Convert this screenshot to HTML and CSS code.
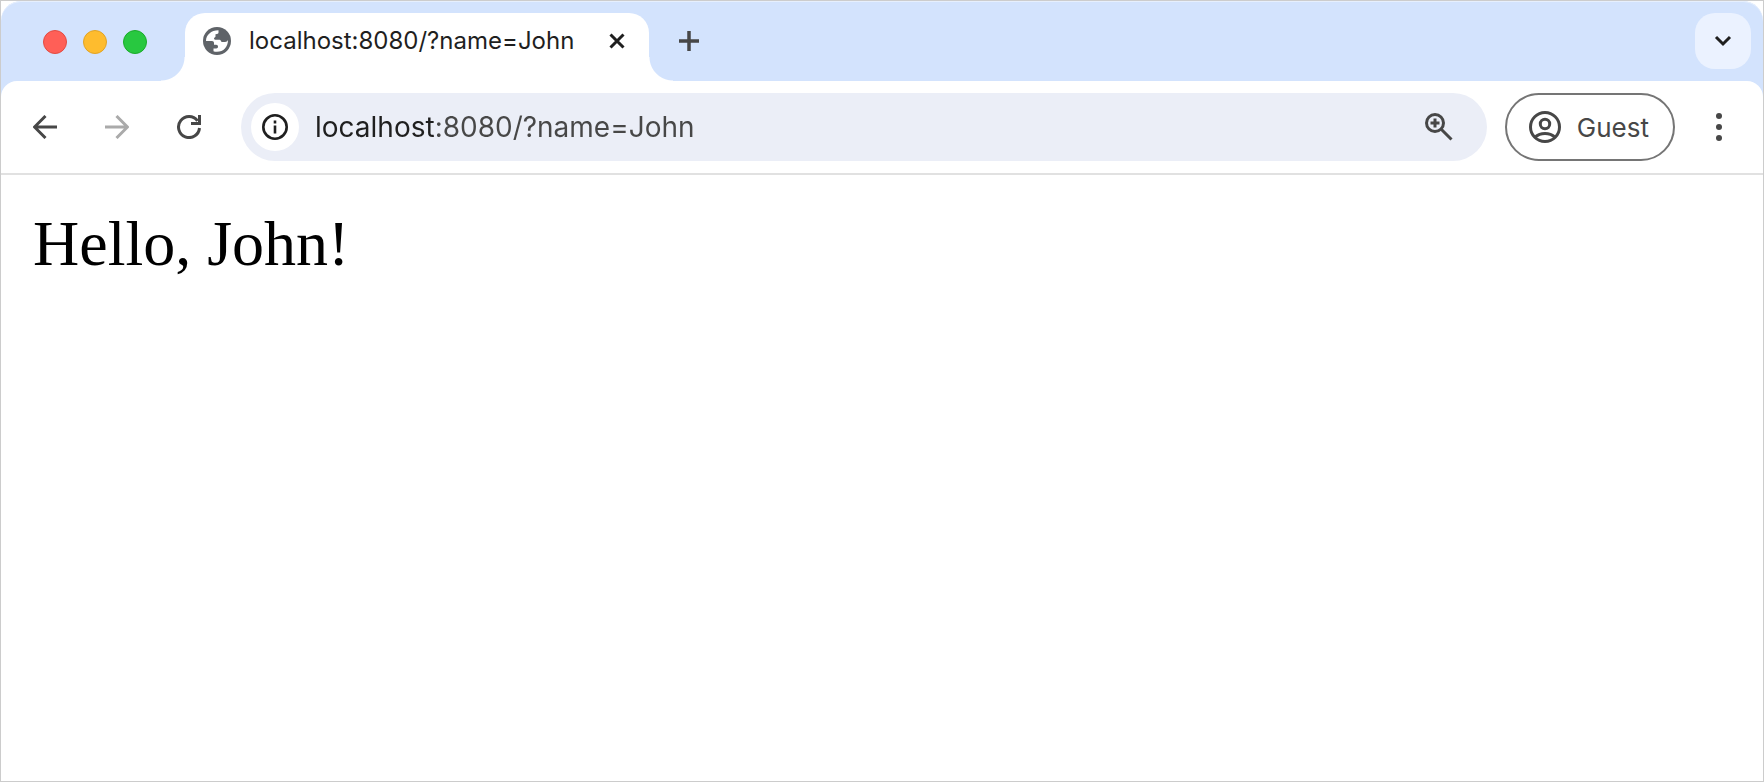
FILE: index.html
```html
<!DOCTYPE html>
<html lang="en">
<head>
<meta charset="utf-8">
<title>localhost:8080/?name=John</title>
<link rel="stylesheet" href="styles.css">
</head>
<body>
<div class="window">
  <div class="browser-frame">
    <header class="tab-strip">
      <div class="traffic-lights">
        <button class="light light-close" aria-label="Close window"></button>
        <button class="light light-minimize" aria-label="Minimize window"></button>
        <button class="light light-zoom" aria-label="Zoom window"></button>
      </div>
      <div class="tab">
        <svg class="favicon" viewBox="0 0 28 28" aria-hidden="true">
          <circle cx="14" cy="14" r="14" fill="#5f6368"/>
          <path fill="#fff" d="M3 14C3 8 8 3.200 15.500 3.200V5.500C15.500 6.500 14.500 7.200 12.500 7.200V9.500C12.500 10.500 11 10.200 11 11.500C11 12.500 11.800 12.700 13 12.700H16.500C18 12.700 18 15 19 15H22C23.500 15 24.300 14 25 13C25 20 20.500 24.800 14 24.800C12.500 24.800 11.300 24.700 10.500 24.300V21.500H13.200C14.500 21.500 15 20.500 15 19.500C15 18.500 14.200 17.800 13.200 17.800H11V16C11 14.700 10.200 14 9 14Z"/>
        </svg>
        <span class="tab-title">localhost:8080/?name=John</span>
        <button class="tab-close" aria-label="Close tab">
          <svg viewBox="0 0 16 16" width="16" height="16"><path d="M1.500 1.500l13 13M14.500 1.500l-13 13" stroke="currentColor" stroke-width="3"/></svg>
        </button>
      </div>
      <button class="new-tab" aria-label="New tab">
        <svg viewBox="0 0 20 20" width="20" height="20"><path d="M10 0v20M0 10h20" stroke="currentColor" stroke-width="3.500"/></svg>
      </button>
      <button class="tab-search" aria-label="Search tabs">
        <svg viewBox="0 0 18 12" width="18" height="12"><path d="M2 2l7 7 7-7" fill="none" stroke="currentColor" stroke-width="3"/></svg>
      </button>
    </header>
    <nav class="toolbar">
      <div class="nav-buttons">
        <button class="icon-button" aria-label="Back">
          <svg viewBox="0 0 24 24" width="24" height="24"><path d="M24 12H2M12.500 1L1.500 12l11 11" fill="none" stroke="currentColor" stroke-width="3"/></svg>
        </button>
        <button class="icon-button" aria-label="Forward" disabled>
          <svg viewBox="0 0 24 24" width="24" height="24"><path d="M0 12h22M11.500 1l11 11-11 11" fill="none" stroke="currentColor" stroke-width="3"/></svg>
        </button>
        <button class="icon-button" aria-label="Reload">
          <svg viewBox="0 0 24 24" width="24" height="24"><path d="M22.500 13A10.500 10.500 0 1 1 20.500 5.800M22.500 0v8.500H14" fill="none" stroke="currentColor" stroke-width="3"/></svg>
        </button>
      </div>
      <form class="omnibox">
        <button type="button" class="site-info" aria-label="View site information">
          <svg viewBox="0 0 26 26" width="26" height="26"><circle cx="13" cy="13" r="11.700" fill="none" stroke="currentColor" stroke-width="2.600"/><path d="M13 11.500v8M13 6.500v3" stroke="currentColor" stroke-width="2.600"/></svg>
        </button>
        <input class="address" type="text" aria-label="Address and search bar" value="localhost:8080/?name=John" spellcheck="false">
        <button type="button" class="page-zoom" aria-label="Page zoom">
          <svg viewBox="0 0 28 28" width="28" height="28"><circle cx="10" cy="10" r="8.500" fill="none" stroke="currentColor" stroke-width="3"/><path d="M16.500 16.500L26.500 26.500M10 5.500v9M5.500 10h9" stroke="currentColor" stroke-width="3"/></svg>
        </button>
      </form>
      <button class="profile">
        <svg viewBox="0 0 32 32" width="32" height="32" fill="none" stroke="currentColor" stroke-width="3"><circle cx="16" cy="16" r="14.500"/><circle cx="16" cy="13" r="4.700"/><path d="M6 26.200C11.500 21.200 20.500 21.200 26 26.200"/></svg>
        <span>Guest</span>
      </button>
      <button class="menu" aria-label="Menu">
        <svg viewBox="0 0 6 28" width="6" height="28" fill="currentColor"><circle cx="3" cy="3" r="3"/><circle cx="3" cy="14" r="3"/><circle cx="3" cy="25" r="3"/></svg>
      </button>
    </nav>
  </div>
  <main class="page">
    <p class="greeting">Hello, John!</p>
  </main>
</div>
</body>
</html>
```
FILE: styles.css
```css
* {
  box-sizing: border-box;
}

body {
  margin: 0;
  background: #fff;
  font-family: Inter, "Liberation Sans", sans-serif;
}

button {
  display: flex;
  align-items: center;
  justify-content: center;
  margin: 0;
  padding: 0;
  border: 0;
  background: none;
  color: #474747;
  font: inherit;
}

svg {
  flex: none;
}

.window {
  display: flex;
  flex-direction: column;
  min-height: 100vh;
  border: 1px solid #ccc;
}

.browser-frame {
  border-radius: 20px 20px 0 0;
  background: #d3e3fd;
  box-shadow: inset 0 1px #e6effd;
}

.tab-strip {
  display: flex;
  padding: 12px 12px 0 42px;
}

.traffic-lights {
  display: flex;
  gap: 16px;
  margin: 17px 38px 0 0;
}

.light {
  width: 24px;
  height: 24px;
  border: 1px solid;
  border-radius: 50%;
}

.light-close {
  border-color: #e24b41;
  background: #ff5f57;
}

.light-minimize {
  border-color: #e1a325;
  background: #febc2e;
}

.light-zoom {
  border-color: #1aab29;
  background: #28c840;
}

.tab {
  position: relative;
  display: flex;
  align-items: flex-start;
  width: 464px;
  height: 68px;
  padding: 0 20px 0 18px;
  border-radius: 20px 20px 0 0;
  background: #fff;
}

.tab::before,
.tab::after {
  position: absolute;
  bottom: 0;
  width: 24px;
  height: 24px;
  content: "";
}

.tab::before {
  right: 100%;
  background: radial-gradient(circle at 0 0, transparent 23px, #fff 24px);
}

.tab::after {
  left: 100%;
  background: radial-gradient(circle at 100% 0, transparent 23px, #fff 24px);
}

.favicon {
  width: 28px;
  height: 28px;
  margin: 14px 18px 0 0;
}

.tab-title {
  flex: 1;
  color: #1f1f1f;
  font-size: 24px;
  line-height: 56px;
  white-space: nowrap;
}

.tab-close {
  width: 24px;
  height: 56px;
  color: #1f1f1f;
}

.new-tab {
  width: 56px;
  height: 56px;
  margin-left: 12px;
}

.tab-search {
  width: 56px;
  height: 56px;
  margin-left: auto;
  border-radius: 20px;
  background: #ebf2ff;
  color: #1f1f1f;
}

.toolbar {
  display: flex;
  align-items: center;
  padding: 12px 16px 12px 8px;
  border-bottom: 2px solid #e1e1e1;
  border-radius: 16px 16px 0 0;
  background: #fff;
}

.nav-buttons {
  display: flex;
  margin-right: 16px;
}

.icon-button {
  width: 72px;
  height: 68px;
}

.icon-button:disabled {
  color: #aaa;
}

.omnibox {
  display: flex;
  flex: 1;
  align-items: center;
  height: 68px;
  padding: 0 28px 0 10px;
  border-radius: 34px;
  background: #ebeef7;
}

.site-info {
  width: 48px;
  height: 48px;
  margin-right: 16px;
  border-radius: 50%;
  background: #fff;
  color: #1f1f1f;
}

/* The host name is drawn darker than the rest of the address. */
.address {
  flex: 1;
  min-width: 0;
  height: 48px;
  padding: 0;
  border: 0;
  outline: 0;
  background: linear-gradient(90deg, #1f1f1f 120px, #474747 120px);
  background-clip: text;
  color: transparent;
  font: 28px Inter, "Liberation Sans", sans-serif;
}

.page-zoom {
  width: 40px;
  height: 48px;
}

.profile {
  gap: 16px;
  height: 68px;
  margin-left: 18px;
  padding: 0 24px 0 22px;
  border: 2px solid #757575;
  border-radius: 34px;
  font-size: 26px;
}

.menu {
  width: 56px;
  height: 68px;
  margin-left: 16px;
}

.page {
  flex: 1;
  padding: 32px;
}

.greeting {
  margin: 0;
  color: #000;
  font: 64px/74px "Liberation Serif", serif;
}
```
